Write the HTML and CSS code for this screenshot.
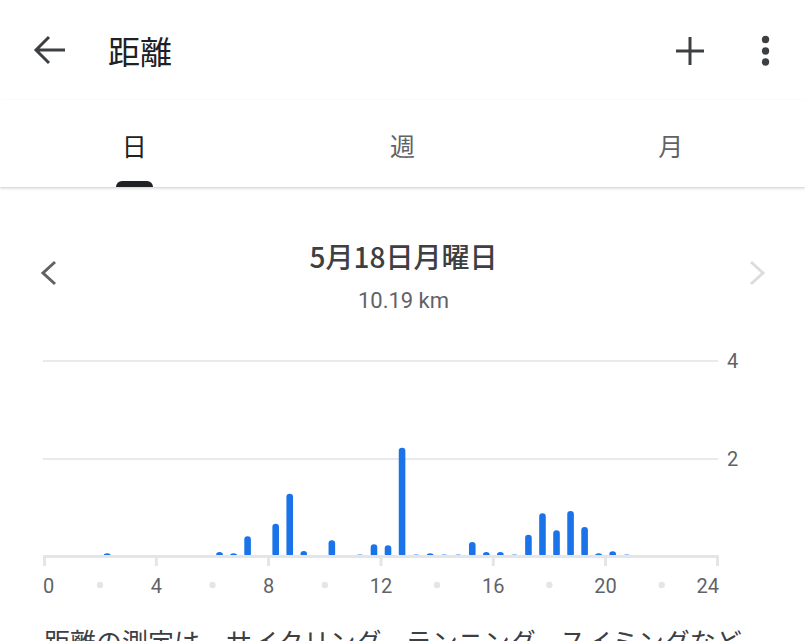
FILE: index.html
```html
<!DOCTYPE html>
<html lang="ja">
<head>
<meta charset="utf-8">
<title>距離</title>
<link rel="stylesheet" href="styles.css">
</head>
<body>
<div class="screen">
  <header class="appbar">
    <button class="icon-btn" aria-label="戻る">
      <svg width="40" height="40" viewBox="0 0 40 40"><path d="M35 20H6M19 7L6 20l13 13" fill="none" stroke="#3c4043" stroke-width="3" stroke-linecap="butt" stroke-linejoin="miter"/></svg>
    </button>
    <h1 class="title">距離</h1>
    <div class="actions">
      <button class="icon-btn" aria-label="追加">
        <svg width="40" height="40" viewBox="0 0 40 40"><path d="M6 21H34M20 7V35" fill="none" stroke="#3c4043" stroke-width="3"/></svg>
      </button>
      <button class="icon-btn" aria-label="その他">
        <svg width="40" height="40" viewBox="0 0 40 40"><circle cx="20.5" cy="9.5" r="3.7" fill="#3c4043"/><circle cx="20.5" cy="21" r="3.7" fill="#3c4043"/><circle cx="20.5" cy="32" r="3.7" fill="#3c4043"/></svg>
      </button>
    </div>
  </header>

  <nav class="tabs">
    <div class="tab active"><span class="tab-label">日</span><i class="indicator"></i></div>
    <div class="tab"><span class="tab-label">週</span><i class="indicator"></i></div>
    <div class="tab"><span class="tab-label">月</span><i class="indicator"></i></div>
  </nav>

  <main class="content">
    <section class="date-nav">
      <button class="chev" aria-label="前へ">
        <svg width="24" height="30" viewBox="0 0 24 30"><path d="M17 4L5 15l12 11" fill="none" stroke="#5f6368" stroke-width="3"/></svg>
      </button>
      <div class="date-info">
        <div class="date-title">5月18日月曜日</div>
        <div class="date-total">10.19 km</div>
      </div>
      <button class="chev" aria-label="次へ">
        <svg width="24" height="30" viewBox="0 0 24 30"><path d="M6 4l12 11L6 26" fill="none" stroke="#dcdcdc" stroke-width="3"/></svg>
      </button>
    </section>

    <div class="chart">
      <svg class="chart-svg" width="805" height="260" viewBox="0 0 805 260">
        <g class="grid">
          <line x1="43" y1="20" x2="718" y2="20"/>
          <line x1="43" y1="118" x2="718" y2="118"/>
        </g>
        <g class="bars" id="bars"></g>
        <g class="axis">
          <rect x="43" y="214" width="676" height="3"/>
          <rect x="43" y="214" width="3" height="11"/>
          <rect x="154.8" y="214" width="3" height="11"/>
          <rect x="267" y="214" width="3" height="11"/>
          <rect x="379.5" y="214" width="3" height="11"/>
          <rect x="491.8" y="214" width="3" height="11"/>
          <rect x="604" y="214" width="3" height="11"/>
          <rect x="716" y="214" width="3" height="11"/>
        </g>
        <g class="dots">
          <circle cx="100" cy="244" r="3.2"/>
          <circle cx="212.5" cy="244" r="3.2"/>
          <circle cx="324.8" cy="244" r="3.2"/>
          <circle cx="437" cy="244" r="3.2"/>
          <circle cx="549.4" cy="244" r="3.2"/>
          <circle cx="661.7" cy="244" r="3.2"/>
        </g>
        <g class="labels">
          <text x="43" y="252" text-anchor="start">0</text>
          <text x="156.3" y="252" text-anchor="middle">4</text>
          <text x="268.7" y="252" text-anchor="middle">8</text>
          <text x="381" y="252" text-anchor="middle">12</text>
          <text x="493.3" y="252" text-anchor="middle">16</text>
          <text x="605.6" y="252" text-anchor="middle">20</text>
          <text x="719" y="252" text-anchor="end">24</text>
          <text x="727" y="27" text-anchor="start">4</text>
          <text x="727" y="125" text-anchor="start">2</text>
        </g>
      </svg>
    </div>

    <p class="note">距離の測定は、サイクリング、ランニング、スイミングなどのアクティビティに基づいています。</p>
  </main>
</div>
<script src="chart.js"></script>
</body>
</html>
```

FILE: chart.js
```js
(function () {
  var tops = {
    4: 552.3, 12: 551, 13: 552.3, 14: 535.3, 16: 522.7, 17: 492.7, 18: 550,
    20: 539.3, 22: 553.5, 23: 543.3, 24: 544.3, 25: 446.7, 26: 553.5, 27: 552.3,
    28: 553.5, 29: 553.5, 30: 541, 31: 551, 32: 551, 33: 553.5, 34: 533.7,
    35: 512.3, 36: 529.3, 37: 510, 38: 526, 39: 552.3, 40: 550.3, 41: 553.5
  };
  var g = document.getElementById('bars');
  var ns = 'http://www.w3.org/2000/svg';
  var slot = 674 / 48;
  Object.keys(tops).forEach(function (k) {
    var cx = 44 + (Number(k) + 0.5) * slot;
    var top = tops[k] - 340;
    var r = document.createElementNS(ns, 'rect');
    r.setAttribute('x', (cx - 3.3).toFixed(2));
    r.setAttribute('y', top.toFixed(2));
    r.setAttribute('width', '6.6');
    r.setAttribute('height', (216 - top).toFixed(2));
    r.setAttribute('rx', '3.3');
    g.appendChild(r);
  });
})();
```

FILE: styles.css
```css
* { box-sizing: border-box; }

html, body {
  margin: 0;
  padding: 0;
  background: #ffffff;
}

body {
  font-family: "Roboto", "Noto Sans CJK JP", sans-serif;
  color: #202124;
  overflow: hidden;
}

.screen {
  width: 805px;
  height: 641px;
  overflow: hidden;
  background: #fff;
}

button {
  border: 0;
  background: none;
  padding: 0;
  margin: 0;
  cursor: pointer;
}

.icon-btn {
  width: 40px;
  height: 40px;
  display: flex;
  align-items: center;
  justify-content: center;
}

.icon-btn svg { display: block; }

/* App bar */
.appbar {
  height: 100px;
  display: flex;
  align-items: center;
  padding: 0 20px 0 30px;
}

.title {
  margin: 0 0 0 38px;
  font-family: "Noto Sans CJK JP", sans-serif;
  font-weight: 400;
  font-size: 32px;
  line-height: 40px;
  color: #202124;
  flex: 1;
}

.actions {
  display: flex;
  align-items: center;
  gap: 35px;
}

/* Tabs */
.tabs {
  height: 87px;
  display: grid;
  grid-template-columns: 1fr 1fr 1fr;
  position: relative;
  z-index: 1;
  box-shadow: 0 1px 2px rgba(60, 64, 67, 0.18), 0 2px 3px rgba(60, 64, 67, 0.08);
}

.tab {
  display: flex;
  flex-direction: column;
  align-items: center;
  justify-content: flex-end;
}

.tab-label {
  font-family: "Noto Sans CJK JP", sans-serif;
  font-size: 25px;
  line-height: 30px;
  margin-bottom: 4px;
  color: #5f6368;
}

.tab.active .tab-label { color: #202124; }

.indicator {
  display: block;
  width: 37px;
  height: 6px;
  margin-top: 17px;
  border-radius: 6px 6px 0 0;
  background: transparent;
}

.tab.active .indicator { background: #202124; }

/* Date navigation */
.date-nav {
  display: flex;
  align-items: center;
  justify-content: space-between;
  padding: 0 36px 0 38px;
  margin-top: 52px;
}

.chev {
  width: 24px;
  height: 30px;
  display: flex;
  margin-top: -8px;
}

.date-info {
  display: flex;
  flex-direction: column;
  align-items: center;
}

.date-title {
  font-family: "Noto Sans CJK JP", sans-serif;
  font-size: 28px;
  font-weight: 500;
  line-height: 34px;
  color: #3c4043;
}

.date-total {
  font-size: 22px;
  line-height: 28px;
  margin-top: 14px;
  color: #5f6368;
}

/* Chart */
.chart {
  margin-top: 26px;
  height: 260px;
}

.chart-svg { display: block; }

.grid line {
  stroke: #e8eaed;
  stroke-width: 2;
}

.bars rect { fill: #1a73e8; }

.axis rect { fill: #e3e5e8; }

.dots circle { fill: #e3e5e8; }

.labels text {
  font-family: "Roboto", sans-serif;
  font-size: 20px;
  fill: #5f6368;
}

/* Note */
.note {
  margin: 20px 0 0;
  padding: 0 44px;
  font-family: "Noto Sans CJK JP", sans-serif;
  font-size: 26px;
  line-height: 39px;
  color: #3c4043;
}
```
